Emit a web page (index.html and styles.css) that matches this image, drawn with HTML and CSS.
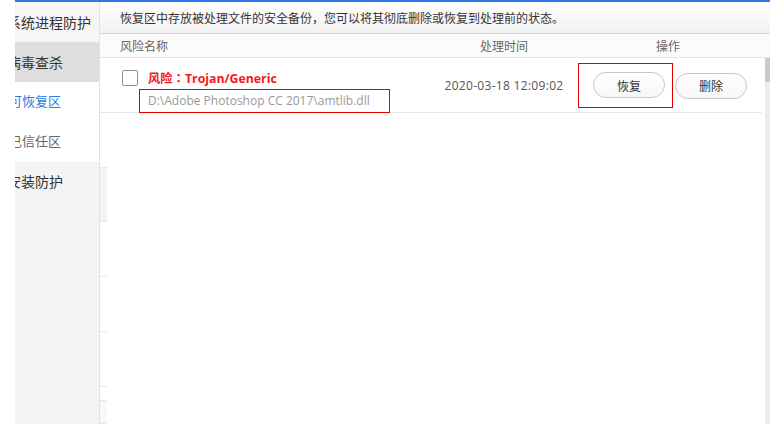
FILE: index.html
```html
<!DOCTYPE html>
<html lang="zh-CN">
<head>
<meta charset="utf-8">
<title>恢复区</title>
<link rel="stylesheet" href="styles.css">
</head>
<body>
<div class="gutter"></div>
<div class="app">
  <div class="topbar"></div>
  <div class="content">
    <nav class="side">
      <div class="side-item first"><span class="label">系统进程防护</span></div>
      <div class="side-item active"><span class="label">病毒查杀</span></div>
      <div class="side-sub current"><span class="label">可恢复区</span></div>
      <div class="side-sub"><span class="label">已信任区</span></div>
      <div class="side-item last"><span class="label">安装防护</span></div>
    </nav>
    <main class="main">
      <div class="notice">恢复区中存放被处理文件的安全备份，您可以将其彻底删除或恢复到处理前的状态。</div>
      <div class="thead">
        <div class="th th-name">风险名称</div>
        <div class="th th-time">处理时间</div>
        <div class="th th-op">操作</div>
      </div>
      <div class="body">
        <div class="table">
          <div class="row">
            <div class="cell cell-name">
              <span class="checkbox"></span>
              <div class="info">
                <div class="title">风险<span class="colon" lang="zh-Hant">：</span>Trojan/Generic</div>
                <div class="path">D:\Adobe Photoshop CC 2017\amtlib.dll</div>
              </div>
            </div>
            <div class="cell cell-time">2020-03-18 12:09:02</div>
            <div class="cell cell-op">
              <div class="mark"><button class="btn">恢复</button></div>
              <button class="btn">删除</button>
            </div>
          </div>
          <div class="rest">
            <div class="ghost">
              <div class="g g1"></div>
              <div class="g"></div>
              <div class="g"></div>
              <div class="g"></div>
              <div class="g g5"></div>
              <div class="g g6"></div>
            </div>
          </div>
        </div>
        <div class="scrollbar"><div class="thumb"></div></div>
      </div>
    </main>
  </div>
</div>
</body>
</html>
```
FILE: styles.css
```css
* { box-sizing: border-box; }
html, body { margin: 0; padding: 0; }
body {
  width: 770px;
  height: 424px;
  overflow: hidden;
  display: flex;
  background: #fff;
  font-family: "Noto Sans CJK SC", "Noto Sans", sans-serif;
  font-size: 12px;
  color: #333;
}
.gutter { width: 15px; flex: none; background: #fff; }
.app { flex: 1; display: flex; flex-direction: column; min-width: 0; }
.topbar { height: 2px; background: #2b7ce9; flex: none; }
.content { flex: 1; display: flex; min-height: 0; }

.side {
  width: 85px;
  flex: none;
  overflow: hidden;
  border-right: 1px solid #e2e2e2;
  display: flex;
  flex-direction: column;
}
.side-item, .side-sub {
  display: flex;
  align-items: center;
  white-space: nowrap;
  flex: none;
}
.side-item { font-size: 14px; color: #333; }
.side-item .label { margin-left: -8px; }
.side-item.first { height: 40px; background: #f6f6f6; }
.side-item.active { height: 40px; background: #dedede; }
.side-sub { height: 40px; padding-bottom: 3px; background: #fff; font-size: 13px; color: #666; }
.side-sub .label { margin-left: -6px; }
.side-sub.current { color: #2f7be0; }
.side-item.last { flex: 1; align-items: flex-start; padding-top: 9px; background: #f4f4f4; }

.main { flex: 1; display: flex; flex-direction: column; min-width: 0; }
.notice {
  height: 32px;
  flex: none;
  padding-left: 20px;
  line-height: 31px;
  background: linear-gradient(#ffffff, #f2f2f2);
  border-bottom: 1px solid #d6d6d6;
  color: #333;
  white-space: nowrap;
}
.thead {
  height: 24px;
  flex: none;
  display: grid;
  grid-template-columns: 330px 148px 1fr;
  align-items: center;
  background: #fbfbfb;
  border-bottom: 1px solid #e6e6e6;
  color: #666;
}
.th-name { padding-left: 20px; }
.th-time { text-align: center; }
.th-op { padding-left: 78px; }

.body { flex: 1; display: flex; min-height: 0; }
.table { flex: 1; display: flex; flex-direction: column; min-width: 0; }
.row {
  height: 55px;
  flex: none;
  display: grid;
  grid-template-columns: 330px 148px 1fr;
  border-bottom: 1px solid #e6e6e6;
  margin-right: 3px;
}
.cell { display: flex; align-items: center; }
.cell-name { align-items: flex-start; padding-left: 22px; }
.checkbox {
  width: 16px;
  height: 16px;
  margin-top: 12px;
  border: 1px solid #8f8f8f;
  border-radius: 2px;
  background: #fff;
  flex: none;
}
.info { margin-left: 1px; }
.title {
  margin-top: 11px;
  padding-left: 9px;
  line-height: 18px;
  font-family: "Open Sans", "Noto Sans CJK SC", sans-serif;
  font-size: 12.3px;
  font-weight: bold;
  color: #f21a1a;
  white-space: nowrap;
}
.colon { font-family: "Noto Sans CJK TC", sans-serif; }
.path {
  margin-top: 1px;
  height: 24px;
  line-height: 22px;
  padding: 0 8px;
  border: 1px solid #e00000;
  font-family: "Open Sans", "Noto Sans CJK SC", sans-serif;
  color: #9a9a9a;
  white-space: nowrap;
  width: 251px;
}
.cell-time {
  justify-content: center;
  font-family: "Open Sans", "Noto Sans CJK SC", sans-serif;
  letter-spacing: 0.3px;
  color: #555;
  white-space: nowrap;
}
.cell-op { padding-left: 0; gap: 2px; }
.mark {
  border: 1px solid #e00000;
  padding: 8px 7px 9px 14px;
  display: flex;
}
.btn {
  width: 72px;
  height: 26px;
  border: 1px solid #c8c8c8;
  border-radius: 13px;
  background: linear-gradient(#ffffff, #f7f7f7);
  font-family: "Noto Sans CJK SC", sans-serif;
  font-size: 12px;
  color: #333;
  padding: 0;
}

.rest { flex: 1; display: flex; }
.ghost {
  width: 7px;
  display: flex;
  flex-direction: column;
}
.g { height: 55px; flex: none; border-bottom: 1px solid #e8e8e8; }
.g1 { margin-top: 54px; border-top: 1px solid #e8e8e8; background: #f4f4f4; }
.g5 { height: 14px; }
.g6 { flex: 1; background: #f8f8f8; }

.scrollbar { width: 5px; flex: none; background: #ececec; }
.thumb { height: 24px; background: #c9c9c9; }
```
